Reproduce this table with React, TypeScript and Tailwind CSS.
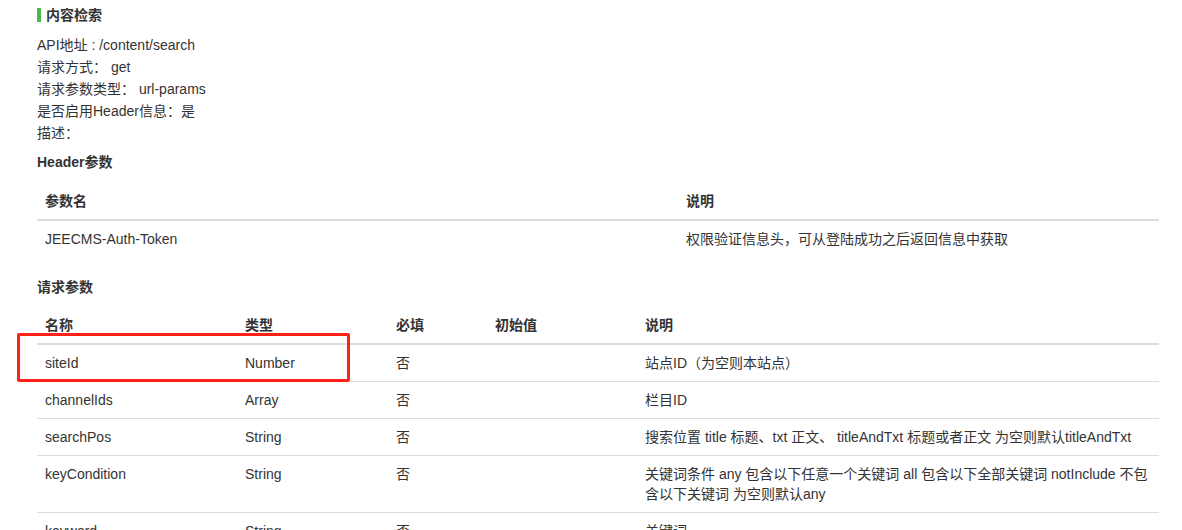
import React from "react";

const font = { fontFamily: '"Liberation Sans", "Noto Sans CJK SC", sans-serif' };

interface Param {
  name: string;
  type: string;
  required: string;
  initial: string;
  desc: string;
}

const params: Param[] = [
  { name: "siteId", type: "Number", required: "否", initial: "", desc: "站点ID（为空则本站点）" },
  { name: "channelIds", type: "Array", required: "否", initial: "", desc: "栏目ID" },
  { name: "searchPos", type: "String", required: "否", initial: "", desc: "搜索位置 title 标题、txt 正文、 titleAndTxt 标题或者正文 为空则默认titleAndTxt" },
  { name: "keyCondition", type: "String", required: "否", initial: "", desc: "关键词条件 any 包含以下任意一个关键词 all 包含以下全部关键词 notInclude 不包含以下关键词 为空则默认any" },
  { name: "keyword", type: "String", required: "否", initial: "", desc: "关键词" },
];

export default function App() {
  return (
    <div className="relative h-[530px] w-[1182px] overflow-hidden bg-white pl-[37px] text-[14px] text-[#333]" style={font}>
      {/* Section title */}
      <div className="mt-[4px] flex h-[22px] items-center">
        <span className="h-[14px] w-[4px] bg-[#4cb84c]" />
        <span className="pl-[5px] text-[14px] font-bold leading-[22px]">内容检索</span>
      </div>

      {/* API info */}
      <div className="mt-[8px] leading-[22px]">
        <div>API地址 : /content/search</div>
        <div>请求方式： get</div>
        <div>请求参数类型： url-params</div>
        <div>是否启用Header信息：是</div>
        <div>描述：</div>
      </div>

      <div className="mt-[8px] text-[14px] font-bold leading-[20px]">Header参数</div>

      {/* Header table */}
      <table className="mt-[11px] w-[1122px] table-fixed border-collapse text-left leading-[20px]">
        <thead>
          <tr className="border-b-2 border-[#dddddd]">
            <th className="w-[641px] px-[8px] py-[8px] font-bold">参数名</th>
            <th className="px-[8px] py-[8px] font-bold">说明</th>
          </tr>
        </thead>
        <tbody>
          <tr>
            <td className="px-[8px] py-[8px]">JEECMS-Auth-Token</td>
            <td className="px-[8px] py-[8px]">权限验证信息头，可从登陆成功之后返回信息中获取</td>
          </tr>
        </tbody>
      </table>

      <div className="mt-[20px] text-[14px] font-bold leading-[20px]">请求参数</div>

      {/* Request params table */}
      <table className="mt-[10px] w-[1122px] table-fixed border-collapse text-left leading-[20px]">
        <thead>
          <tr className="border-b-2 border-[#dddddd]">
            <th className="w-[200px] px-[8px] py-[8px] font-bold">名称</th>
            <th className="w-[151px] px-[8px] py-[8px] font-bold">类型</th>
            <th className="w-[99px] px-[8px] py-[8px] font-bold">必填</th>
            <th className="w-[150px] px-[8px] py-[8px] font-bold">初始值</th>
            <th className="px-[8px] py-[8px] font-bold">说明</th>
          </tr>
        </thead>
        <tbody>
          {params.map((p) => (
            <tr key={p.name} className="border-b border-[#dddddd] align-top">
              <td className="px-[8px] py-[8px]">{p.name}</td>
              <td className="px-[8px] py-[8px]">{p.type}</td>
              <td className="px-[8px] py-[8px]">{p.required}</td>
              <td className="px-[8px] py-[8px]">{p.initial}</td>
              <td className="px-[8px] py-[8px]">{p.desc}</td>
            </tr>
          ))}
        </tbody>
      </table>

      {/* Red annotation box */}
      <div className="absolute left-[17px] top-[333px] h-[49px] w-[333px] rounded-[2px] border-[3px] border-[#ff2116]" />
    </div>
  );
}
